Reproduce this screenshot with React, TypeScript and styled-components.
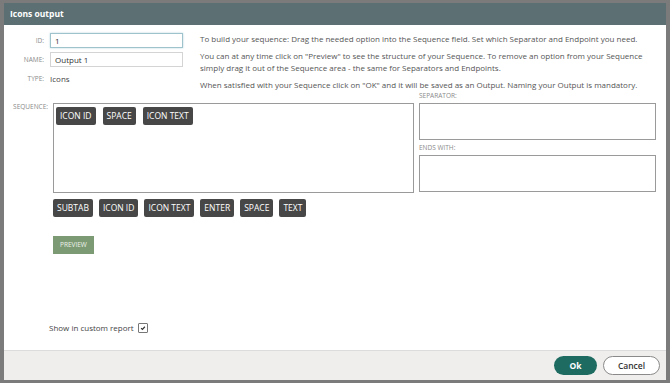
import styled, { createGlobalStyle } from "styled-components"

const Global = createGlobalStyle`
html, body {
margin: 0;
padding: 0;
}
body {
font-family: "Open Sans", "Liberation Sans", sans-serif;
background: #7b7b7b;
}
`

const sequence = ["ICON ID", "SPACE", "ICON TEXT"]
const options = ["SUBTAB", "ICON ID", "ICON TEXT", "ENTER", "SPACE", "TEXT"]

const App = () => {
    return (
        <Page>
            <Global />
            <Dialog>
                <Header>Icons output</Header>
                <Body>
                    <Top>
                        <Fields>
                            <FieldRow>
                                <Label>ID:</Label>
                                <Input focused defaultValue="1" />
                            </FieldRow>
                            <FieldRow>
                                <Label>NAME:</Label>
                                <Input defaultValue="Output 1" />
                            </FieldRow>
                            <FieldRow>
                                <Label>TYPE:</Label>
                                <Value>Icons</Value>
                            </FieldRow>
                        </Fields>
                        <Help>
                            <p>To build your sequence: Drag the needed option into the Sequence field. Set which Separator and Endpoint you need.</p>
                            <p>You can at any time click on "Preview" to see the structure of your Sequence. To remove an option from your Sequence simply drag it out of the Sequence area - the same for Separators and Endpoints.</p>
                            <p>When satisfied with your Sequence click on "OK" and it will be saved as an Output. Naming your Output is mandatory.</p>
                        </Help>
                    </Top>

                    <Builder>
                        <SeqLabel>SEQUENCE:</SeqLabel>
                        <SeqColumn>
                            <SeqBox>
                                {sequence.map((s, i) => <Chip key={i}>{s}</Chip>)}
                            </SeqBox>
                            <ChipRow>
                                {options.map((s, i) => <Chip key={i}>{s}</Chip>)}
                            </ChipRow>
                            <PreviewButton>PREVIEW</PreviewButton>
                        </SeqColumn>
                        <SideColumn>
                            <SmallLabel>SEPARATOR:</SmallLabel>
                            <SideBox />
                            <SmallLabel>ENDS WITH:</SmallLabel>
                            <SideBox />
                        </SideColumn>
                    </Builder>

                    <Space />
                    <CheckRow>
                        Show in custom report
                        <CheckBox>
                            <svg width="6" height="6" viewBox="0 0 8 8">
                                <path d="M1.5 4.2 L3.2 5.8 L6.5 2.3" fill="none" stroke="#333" strokeWidth="1.6" />
                            </svg>
                        </CheckBox>
                    </CheckRow>
                </Body>
                <Footer>
                    <OkButton>Ok</OkButton>
                    <CancelButton>Cancel</CancelButton>
                </Footer>
            </Dialog>
        </Page>
    )
}

export default App

const Page = styled.div`
height: 383px;
box-sizing: border-box;
padding: 3px 4px 3px 4px;
display: flex;
`

const Dialog = styled.div`
flex: 1;
display: flex;
flex-direction: column;
background: white;
`

const Header = styled.div`
height: 22px;
flex-shrink: 0;
background: #5c7074;
color: white;
font-weight: bold;
font-size: 8.5px;
line-height: 22px;
padding-left: 6px;
`

const Body = styled.div`
flex: 1;
display: flex;
flex-direction: column;
`

const Top = styled.div`
display: flex;
height: 67px;
box-sizing: border-box;
padding-top: 8px;
`

const Fields = styled.div`
display: flex;
flex-direction: column;
gap: 4px;
width: 196px;
`

const FieldRow = styled.div`
display: flex;
align-items: center;
gap: 6px;
height: 15px;
`

const Label = styled.div`
width: 40px;
text-align: right;
font-size: 6.5px;
color: #8a8a8a;
text-transform: uppercase;
`

const Input = styled.input<{ focused?: boolean }>`
width: 133px;
height: 15px;
box-sizing: border-box;
border: 1px solid ${p => p.focused ? "#9ec3cc" : "#d4d4d4"};
box-shadow: ${p => p.focused ? "0 0 2px #b8d7de" : "none"};
font-family: inherit;
font-size: 8px;
color: #333;
padding: 0 4px;
outline: none;
`

const Value = styled.div`
font-size: 8px;
color: #444;
`

const Help = styled.div`
flex: 1;
font-size: 8px;
line-height: 12px;
color: #555;
padding-right: 10px;

p {
    margin: 0 0 5px 0;
}
`

const Builder = styled.div`
display: flex;
padding-right: 10px;
`

const SeqLabel = styled.div`
width: 44px;
padding-top: 10px;
text-align: right;
font-size: 6.5px;
color: #8a8a8a;
`

const SeqColumn = styled.div`
margin-left: 5px;
width: 361px;
`

const SeqBox = styled.div`
margin-top: 11px;
height: 90px;
box-sizing: border-box;
border: 1px solid #9a9a9a;
padding: 3px 2px;
display: flex;
align-items: flex-start;
gap: 7px;
`

const Chip = styled.div`
height: 18px;
padding: 0 4px;
background: #474747;
color: white;
border-radius: 2px;
font-size: 8.5px;
line-height: 18px;
white-space: nowrap;
`

const ChipRow = styled.div`
display: flex;
gap: 6px;
margin-top: 6px;
`

const PreviewButton = styled.div`
display: inline-block;
margin-top: 19px;
height: 18px;
padding: 0 7px;
background: #7c9b74;
color: #eef3ec;
font-size: 6.5px;
line-height: 18px;
`

const SideColumn = styled.div`
flex: 1;
margin-left: 5px;
display: flex;
flex-direction: column;
`

const SmallLabel = styled.div`
font-size: 6.5px;
color: #8a8a8a;
height: 11px;
line-height: 8px;

& + div + & {
    height: 15px;
    line-height: 16px;
}
`

const SideBox = styled.div`
height: 37px;
box-sizing: border-box;
border: 1px solid #9a9a9a;
`

const Space = styled.div`
flex: 1;
`

const CheckRow = styled.div`
display: flex;
align-items: center;
gap: 4px;
padding-left: 45px;
margin-bottom: 17px;
font-size: 8px;
color: #444;
`

const CheckBox = styled.div`
width: 8px;
height: 8px;
border: 1px solid #777;
border-radius: 1px;
display: flex;
align-items: center;
justify-content: center;
`

const Footer = styled.div`
height: 29px;
flex-shrink: 0;
background: #efeeec;
border-top: 1px solid #dcdcdc;
display: flex;
align-items: center;
justify-content: flex-end;
gap: 6px;
padding-right: 6px;
`

const OkButton = styled.div`
width: 43px;
height: 19px;
border-radius: 10px;
background: #1d6b61;
color: white;
font-weight: bold;
font-size: 8.5px;
display: flex;
align-items: center;
justify-content: center;
`

const CancelButton = styled.div`
width: 57px;
height: 19px;
box-sizing: border-box;
border-radius: 10px;
border: 1px solid #8a8a8a;
background: white;
color: #333;
font-weight: 600;
font-size: 8.5px;
display: flex;
align-items: center;
justify-content: center;
`
